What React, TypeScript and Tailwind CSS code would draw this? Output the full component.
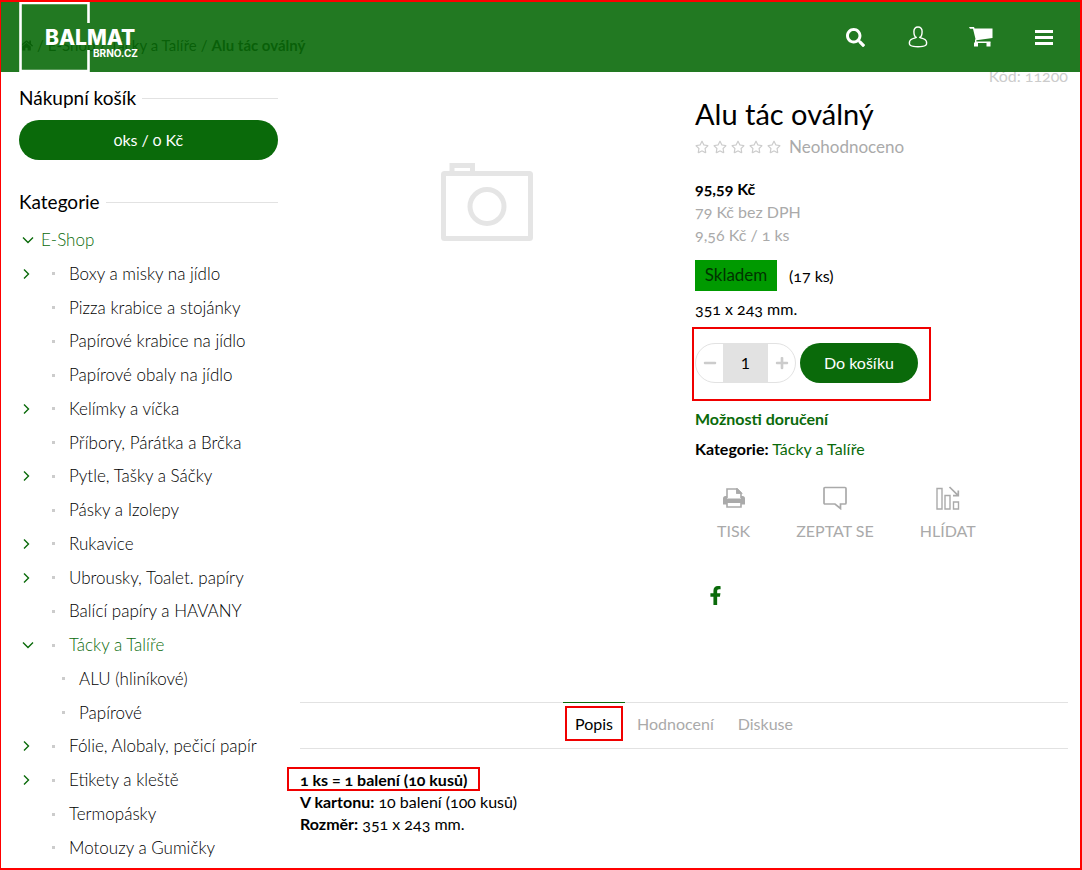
import { useState } from "react";
import { FaFacebookF, FaHome, FaMinus, FaPlus, FaRegStar, FaSearch } from "react-icons/fa";

type Category = {
    name: string;
    level: number;
    arrow?: "right" | "down";
    active?: boolean;
};

const categories: Category[] = [
    { name: "E-Shop", level: 0, arrow: "down", active: true },
    { name: "Boxy a misky na jídlo", level: 1, arrow: "right" },
    { name: "Pizza krabice a stojánky", level: 1 },
    { name: "Papírové krabice na jídlo", level: 1 },
    { name: "Papírové obaly na jídlo", level: 1 },
    { name: "Kelímky a víčka", level: 1, arrow: "right" },
    { name: "Příbory, Párátka a Brčka", level: 1 },
    { name: "Pytle, Tašky a Sáčky", level: 1, arrow: "right" },
    { name: "Pásky a Izolepy", level: 1 },
    { name: "Rukavice", level: 1, arrow: "right" },
    { name: "Ubrousky, Toalet. papíry", level: 1, arrow: "right" },
    { name: "Balící papíry a HAVANY", level: 1 },
    { name: "Tácky a Talíře", level: 1, arrow: "down", active: true },
    { name: "ALU (hliníkové)", level: 2 },
    { name: "Papírové", level: 2 },
    { name: "Fólie, Alobaly, pečicí papír", level: 1, arrow: "right" },
    { name: "Etikety a kleště", level: 1, arrow: "right" },
    { name: "Termopásky", level: 1 },
    { name: "Motouzy a Gumičky", level: 1 },
];

const tabs = ["Popis", "Hodnocení", "Diskuse"];

const Logo = () => (
    <svg width="124" height="71" viewBox="0 0 124 71" role="img" aria-label="Balmat Brno.cz">
        <path d="M69.500 21V1H1.500V69H69.500V48" fill="none" stroke="#fff" strokeWidth="2.600" />
        <g fill="#fff" fontFamily="Inter, sans-serif">
            <text x="26" y="43" fontSize="21" fontWeight="800">BALMAT</text>
            <text x="74" y="55" fontSize="10" fontWeight="700">BRNO.CZ</text>
        </g>
    </svg>
);

const UserIcon = () => (
    <svg width="20" height="22" viewBox="0 0 20 22" fill="none" stroke="#fff" strokeWidth="1.400">
        <path d="M10 1C7.400 1 5.900 2.700 5.900 5.400C5.900 8.200 6.900 10.700 8.200 11.400C7.900 12.200 2.400 12.300 1.600 15.400C.6 19.200 2.500 20.800 10 20.800S19.400 19.200 18.400 15.400C17.600 12.300 12.100 12.200 11.800 11.400C13.100 10.700 14.100 8.200 14.100 5.400C14.100 2.700 12.600 1 10 1Z" />
    </svg>
);

const CartIcon = () => (
    <svg width="24" height="20" viewBox="0 0 24 20" fill="#fff">
        <path d="M0 0H5L5.600 1.600H23.500V11L7.400 13.200V14.400H21.500V16H6V13L6.500 12L4 1.800H1Z" />
        <path d="M5 15.500H9V19.500H5ZM17.500 15.500H21.500V19.500H17.500Z" />
    </svg>
);

const PrintIcon = () => (
    <svg width="22" height="20" viewBox="0 0 22 20" fill="none" stroke="#aaa" strokeWidth="1.600">
        <path d="M4 10V1H14L18 5V10M14 1V5H18" />
        <path d="M14 1V5H18Z" fill="#aaa" />
        <path d="M2.500 8H4V10.500H18V8H19.500Q22 8 22 10.500V16.500H18V15H4V16.500H0V10.500Q0 8 2.500 8Z" fill="#aaa" stroke="none" />
        <path d="M4 15V19H18V15" />
    </svg>
);

const WatchIcon = () => (
    <svg width="24" height="24" viewBox="0 0 24 24" fill="none" stroke="#aaa" strokeWidth="1.400">
        <path d="M1 2.500H6V23H1ZM9 9.500H14V23H9ZM17.500 16H22.500V23H17.500Z" />
        <path d="M13.500 1L22 9.300M22.300 4.500V9.700H17" strokeWidth="1.700" />
    </svg>
);

const Arrow = ({ direction }: { direction: "right" | "down" }) => (
    <svg width="12" height="12" viewBox="0 0 12 12" fill="none" stroke="#0a6a0a" strokeWidth="1.400">
        {direction === "down" ? <path d="M1 3.500L6 8.500L11 3.500" /> : <path d="M2 1.500L6.500 6L2 10.500" />}
    </svg>
);

const SectionTitle = ({ children }: { children: string }) => (
    <h2 className="flex items-center gap-1.5 text-[19px] leading-6 after:h-px after:flex-1 after:bg-[#e2e2e2]">
        {children}
    </h2>
);

const Header = () => (
    <header className="absolute inset-x-0 top-0 z-10 flex h-[70px] items-center justify-between bg-[#0a6a0a]/90 pr-6 pl-[18px]">
        <a href="#" className="self-start">
            <Logo />
        </a>
        <nav className="flex items-center gap-[39px] text-white">
            <button aria-label="Hledat" className="flex w-6 justify-center">
                <FaSearch size={19} />
            </button>
            <button aria-label="Přihlášení" className="flex w-6 justify-center">
                <UserIcon />
            </button>
            <button aria-label="Košík" className="flex w-6 justify-center">
                <CartIcon />
            </button>
            <button aria-label="Menu" className="flex w-6 flex-col items-center gap-[3px]">
                <span className="h-[3px] w-[18px] bg-white" />
                <span className="h-[3px] w-[18px] bg-white" />
                <span className="h-[3px] w-[18px] bg-white" />
            </button>
        </nav>
    </header>
);

const Sidebar = () => (
    <aside className="flex w-[259px] shrink-0 flex-col pt-[30px]">
        <SectionTitle>Nákupní košík</SectionTitle>
        <button className="mt-2.5 h-10 shrink-0 rounded-full bg-[#0a6a0a] text-white">0ks / 0 Kč</button>
        <div className="mt-[30px]">
            <SectionTitle>Kategorie</SectionTitle>
        </div>
        <ul className="mt-[15px] flex flex-1 flex-col justify-between pb-[9px] text-[17px] font-light">
            {categories.map((item) => (
                <li key={item.name} className="flex items-center leading-[22px]">
                    <span className="flex w-[22px] pl-[3px]">
                        {item.arrow && <Arrow direction={item.arrow} />}
                    </span>
                    {item.level > 0 && (
                        <span className={item.level === 2 ? "ml-[21px] h-[3px] w-[3px] bg-[#ccc]" : "ml-[11px] h-[3px] w-[3px] bg-[#ccc]"} />
                    )}
                    <a
                        href="#"
                        className={`${item.level > 0 ? "ml-3.5" : ""} ${item.active ? "text-[#0a6a0a]" : "text-black"}`}
                    >
                        {item.name}
                    </a>
                </li>
            ))}
        </ul>
    </aside>
);

const ProductDetail = () => {
    const [qty, setQty] = useState("1");

    return (
        <div className="flex flex-col items-start leading-[22px]">
            <p className="self-end text-[#ccc]">Kód: 11200</p>
            <h1 className="mt-[7px] text-[29px] leading-10">Alu tác oválný</h1>
            <div className="mt-px flex h-6 items-center gap-1 text-[#ccc]">
                {[1, 2, 3, 4, 5].map((star) => (
                    <FaRegStar key={star} size={14} />
                ))}
                <span className="ml-1 text-[17px] text-[#aaa]">Neohodnoceno</span>
            </div>
            <div className="mt-[18px] leading-[23px] text-[#aaa]">
                <p className="font-bold text-black">95,59 Kč</p>
                <p>79 Kč bez DPH</p>
                <p>9,56 Kč / 1 ks</p>
            </div>
            <div className="mt-3.5 flex items-center gap-3">
                <span className="min-w-[82px] bg-[#009a00] px-2 pt-1 pb-[5px] text-center text-[17px] text-[#003300]">Skladem</span>
                <span>(17 ks)</span>
            </div>
            <p className="mt-[7px]">351 x 243 mm.</p>
            <div className="relative mt-[23px] flex gap-1">
                <div className="flex h-10 w-[101px] overflow-hidden rounded-full border border-[#e2e2e2] text-[#ccc]">
                    <button aria-label="Méně" className="flex flex-1 items-center justify-center" onClick={() => setQty(String(Math.max(1, Number(qty) - 1)))}>
                        <FaMinus size={14} />
                    </button>
                    <input
                        aria-label="Množství"
                        className="w-[45px] bg-[#e2e2e2] text-center text-black lining-nums"
                        value={qty}
                        onChange={(e) => setQty(e.target.value)}
                    />
                    <button aria-label="Více" className="flex flex-1 items-center justify-center" onClick={() => setQty(String(Number(qty) + 1))}>
                        <FaPlus size={14} />
                    </button>
                </div>
                <button className="h-10 w-[118px] rounded-full bg-[#0a6a0a] text-white">Do košíku</button>
                <span className="pointer-events-none absolute -top-4 -right-[13px] -bottom-[18px] -left-[3px] border-2 border-[#f00000]" />
            </div>
            <a href="#" className="mt-[25px] font-bold text-[#0a6a0a]">Možnosti doručení</a>
            <p className="mt-2">
                <b>Kategorie:</b> <a href="#" className="text-[#0a6a0a]">Tácky a Talíře</a>
            </p>
            <div className="mt-[26px] flex gap-[46px] pl-[22px] text-[#aaa]">
                <a href="#" className="flex flex-col items-center gap-2.5">
                    <span className="flex h-6 items-center"><PrintIcon /></span>
                    TISK
                </a>
                <a href="#" className="flex flex-col items-center gap-2.5">
                    <svg width="24" height="24" viewBox="0 0 24 24" fill="none" stroke="#aaa" strokeWidth="1.700">
                        <path d="M2 1.500H22Q23 1.500 23 2.500V17Q23 18 22 18H17.500V22.500L12 18H2Q1 18 1 17V2.500Q1 1.500 2 1.500Z" />
                    </svg>
                    ZEPTAT SE
                </a>
                <a href="#" className="flex flex-col items-center gap-2.5">
                    <WatchIcon />
                    HLÍDAT
                </a>
            </div>
            <a href="#" aria-label="Facebook" className="mt-11 ml-[11px] text-[#0a6a0a]">
                <FaFacebookF size={19} />
            </a>
        </div>
    );
};

const App = () => {
    const [activeTab, setActiveTab] = useState("Popis");

    return (
        <div className="relative flex min-h-screen flex-col border-2 border-l-1 border-[#ff0000] bg-white font-[Lato,sans-serif] text-base text-black oldstyle-nums">
            <Header />
            <nav className="flex h-[54px] items-end gap-1 pl-[19px] text-[15px] leading-[22px]">
                <a href="#" aria-label="Domů" className="mb-1"><FaHome size={13} /></a> /
                <a href="#">E-Shop</a> /
                <a href="#">Tácky a Talíře</a> / <b>Alu tác oválný</b>
            </nav>
            <div className="flex flex-1 gap-[22px] pr-3 pl-[18px]">
                <Sidebar />
                <main className="min-w-0 flex-1 pt-[9px]">
                    <section className="grid grid-cols-2 gap-[22px]">
                        <div className="flex justify-center pt-[98px]">
                            <svg width="92" height="78" viewBox="0 0 92 78" fill="none" stroke="#e5e5e5" strokeWidth="5">
                                <rect x="2.500" y="10.500" width="87" height="65" rx="1" />
                                <path d="M11 10V2.500H31.500V10" />
                                <circle cx="46" cy="43.500" r="17" />
                            </svg>
                        </div>
                        <ProductDetail />
                    </section>
                    <div className="mt-[97px] flex h-[47px] justify-center border-y border-[#e2e2e2]">
                        {tabs.map((tab) => (
                            <button
                                key={tab}
                                onClick={() => setActiveTab(tab)}
                                className={
                                    tab === activeTab
                                        ? "relative -mt-px border-t border-[#0a6a0a] px-3 pb-1"
                                        : "px-3 pb-1 text-[#aaa]"
                                }
                            >
                                {tab}
                                {tab === activeTab && (
                                    <span className="pointer-events-none absolute inset-x-0.5 top-[3px] bottom-[7px] border-2 border-[#f00000]" />
                                )}
                            </button>
                        ))}
                    </div>
                    <div className="mt-5 leading-[22px]">
                        <p>
                            <b className="relative">
                                1 ks = 1 balení (10 kusů)
                                <span className="pointer-events-none absolute -inset-x-[13px] -top-[3px] -bottom-0.5 border-2 border-[#f00000]" />
                            </b>
                        </p>
                        <p><b>V kartonu:</b> 10 balení (100 kusů)</p>
                        <p><b>Rozměr:</b> 351 x 243 mm.</p>
                    </div>
                </main>
            </div>
        </div>
    );
};

export default App;
